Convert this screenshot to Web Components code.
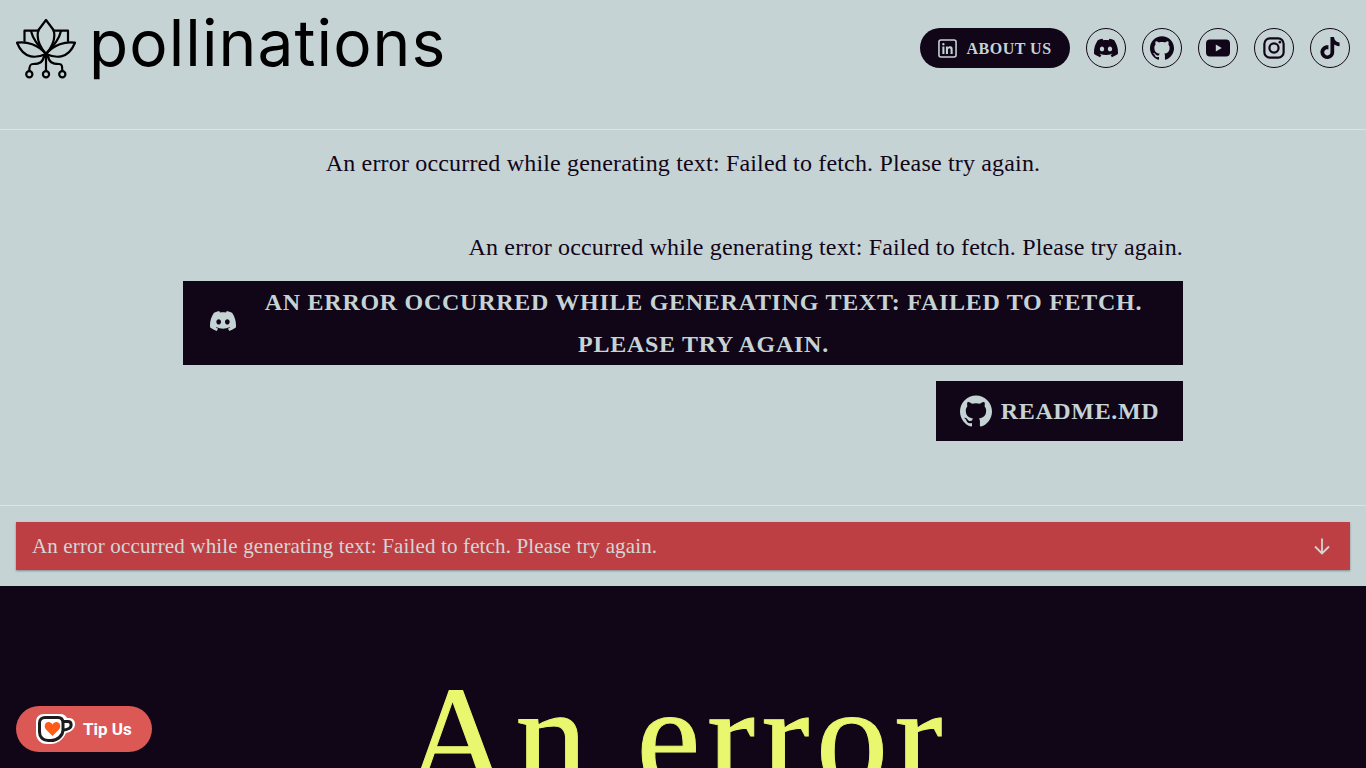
<!DOCTYPE html>
<html lang="en">
<head>
<meta charset="utf-8">
<title>pollinations</title>
<style>
html { overflow: hidden; }
body {
    margin: 0;
    background: #c5d3d5;
    color: #110518;
    font-family: "Liberation Serif", serif;
}
</style>
</head>
<body>
<site-header></site-header>
<intro-section></intro-section>
<error-bar>An error occurred while generating text: Failed to fetch. Please try again.</error-bar>
<hero-section>An error occurred while generating text: Failed to fetch. Please try again.</hero-section>
<tip-button></tip-button>

<script>
const ICONS = {
    discord: '<path fill="currentColor" d="M20.317 4.3698a19.7913 19.7913 0 00-4.8851-1.5152.0741.0741 0 00-.0785.0371c-.211.3753-.4447.8648-.6083 1.2495-1.8447-.2762-3.68-.2762-5.4868 0-.1636-.3933-.4058-.8742-.6177-1.2495a.077.077 0 00-.0785-.037 19.7363 19.7363 0 00-4.8852 1.515.0699.0699 0 00-.0321.0277C.5334 9.0458-.319 13.5799.0992 18.0578a.0824.0824 0 00.0312.0561c2.0528 1.5076 4.0413 2.4228 5.9929 3.0294a.0777.0777 0 00.0842-.0276c.4616-.6304.8731-1.2952 1.226-1.9942a.076.076 0 00-.0416-.1057c-.6528-.2476-1.2743-.5495-1.8722-.8923a.077.077 0 01-.0076-.1277c.1258-.0943.2517-.1923.3718-.2914a.0743.0743 0 01.0776-.0105c3.9278 1.7933 8.18 1.7933 12.0614 0a.0739.0739 0 01.0785.0095c.1202.099.246.1981.3728.2924a.077.077 0 01-.0066.1276 12.2986 12.2986 0 01-1.8732.8914.0766.0766 0 00-.0407.1067c.3604.698.7719 1.3628 1.225 1.9932a.076.076 0 00.0842.0286c1.961-.6067 3.9495-1.5219 6.0023-3.0294a.077.077 0 00.0313-.0552c.5004-5.177-.8382-9.6739-3.5485-13.6604a.061.061 0 00-.0312-.0286zM8.02 15.3312c-1.1825 0-2.1569-1.0857-2.1569-2.419 0-1.3332.9555-2.4189 2.157-2.4189 1.2108 0 2.1757 1.0952 2.1568 2.419 0 1.3332-.9555 2.4189-2.1569 2.4189zm7.9748 0c-1.1825 0-2.1569-1.0857-2.1569-2.419 0-1.3332.9554-2.4189 2.1569-2.4189 1.2108 0 2.1757 1.0952 2.1568 2.419 0 1.3332-.946 2.4189-2.1568 2.4189Z"/>',
    github: '<path fill="currentColor" d="M12 .297c-6.63 0-12 5.373-12 12 0 5.303 3.438 9.8 8.205 11.385.6.113.82-.258.82-.577 0-.285-.01-1.04-.015-2.04-3.338.724-4.042-1.61-4.042-1.61C4.422 18.07 3.633 17.7 3.633 17.7c-1.087-.744.084-.729.084-.729 1.205.084 1.838 1.236 1.838 1.236 1.07 1.835 2.809 1.305 3.495.998.108-.776.417-1.305.76-1.605-2.665-.3-5.466-1.332-5.466-5.93 0-1.31.465-2.38 1.235-3.22-.135-.303-.54-1.523.105-3.176 0 0 1.005-.322 3.3 1.23.96-.267 1.98-.399 3-.405 1.02.006 2.04.138 3 .405 2.28-1.552 3.285-1.23 3.285-1.23.645 1.653.24 2.873.12 3.176.765.84 1.23 1.91 1.23 3.22 0 4.61-2.805 5.625-5.475 5.92.42.36.81 1.096.81 2.22 0 1.606-.015 2.896-.015 3.286 0 .315.21.69.825.57C20.565 22.092 24 17.592 24 12.297c0-6.627-5.373-12-12-12"/>',
    youtube: '<path fill="currentColor" fill-rule="evenodd" d="M4 3.500h16a4 4 0 014 4v9a4 4 0 01-4 4H4a4 4 0 01-4-4v-9a4 4 0 014-4zm5.800 5v7l6-3.500z"/>',
    instagram: '<g fill="none" stroke="currentColor" stroke-width="2.400"><rect x="1.500" y="1.500" width="21" height="21" rx="6"/><circle cx="12" cy="12" r="5"/></g><circle cx="18.400" cy="5.600" r="1.400" fill="currentColor"/>',
    tiktok: '<path fill="currentColor" d="M12.525.02c1.31-.02 2.61-.01 3.91-.02.08 1.53.63 3.09 1.75 4.17 1.12 1.11 2.7 1.62 4.24 1.79v4.03c-1.44-.05-2.89-.35-4.2-.97-.57-.26-1.1-.59-1.62-.93-.01 2.92.01 5.84-.02 8.75-.08 1.4-.54 2.79-1.35 3.94-1.31 1.92-3.58 3.17-5.91 3.21-1.43.08-2.86-.31-4.08-1.03-2.02-1.19-3.44-3.37-3.65-5.71-.02-.5-.03-1-.01-1.49.18-1.9 1.12-3.72 2.58-4.96 1.66-1.44 3.98-2.13 6.15-1.72.02 1.48-.04 2.96-.04 4.44-.99-.32-2.15-.23-3.02.37-.63.41-1.11 1.04-1.36 1.75-.21.51-.15 1.07-.14 1.61.24 1.64 1.82 3.02 3.5 2.87 1.12-.01 2.19-.66 2.77-1.61.19-.33.4-.67.41-1.06.1-1.79.06-3.57.07-5.36.01-4.03-.01-8.05.02-12.07z"/>',
    linkedin: '<rect x="1.200" y="1.200" width="21.600" height="21.600" rx="2.500" fill="none" stroke="currentColor" stroke-width="2"/><path fill="currentColor" d="M5.500 9.500h2.600V19H5.500zM6.800 5a1.500 1.500 0 110 3 1.500 1.500 0 010-3zM10 9.500h2.500v1.300c.5-.9 1.500-1.500 2.800-1.500 2.500 0 3.200 1.600 3.200 3.900V19h-2.600v-5.200c0-1.200-.3-2.200-1.500-2.200s-1.800.9-1.800 2.200V19H10z"/>'
};

function icon(name, size) {
    return `<svg viewBox="0 0 24 24" width="${size}" height="${size}" aria-hidden="true">${ICONS[name]}</svg>`;
}

class SiteLogo extends HTMLElement {
    connectedCallback() {
        this.attachShadow({ mode: 'open' }).innerHTML = `
<style>
:host { display: flex; align-items: flex-start; gap: 13px; }
svg { display: block; margin-top: 3px; }
span {
    font-family: Inter, sans-serif;
    font-weight: 400;
    font-size: 64px;
    line-height: 54px;
    letter-spacing: 1.1px;
    color: #000;
}
</style>
<svg width="60" height="62" viewBox="16 19 60 62" fill="none" stroke="#000" stroke-width="2.200" stroke-linejoin="round" stroke-linecap="round">
    <path d="M46 20 L38.500 30 C36 38 40 47 46 54 C52 47 56 38 53.500 30 Z"/>
    <path d="M38.500 30.700 H24.500 V41 M53.500 30.700 H68 V41"/>
    <path d="M31 31 C33 40 40 48 46 54 C52 48 59 40 61 31"/>
    <path d="M17 42.700 C27 41 38 45 46 54 C37 58 24 60 17 42.700 Z"/>
    <path d="M75 42.700 C65 41 54 45 46 54 C55 58 68 60 75 42.700 Z"/>
    <path d="M46 54 V71 M44 56 C43 62 40 64 33 64 C30 64 29.300 66 29.300 71 M48 56 C49 62 52 64 59 64 C62 64 62.300 66 62.300 71"/>
    <circle cx="29.300" cy="74.300" r="3.100"/>
    <circle cx="46" cy="74.300" r="3.100"/>
    <circle cx="62.300" cy="74.300" r="3.100"/>
</svg>
<span>pollinations</span>`;
    }
}

class AboutButton extends HTMLElement {
    connectedCallback() {
        this.attachShadow({ mode: 'open' }).innerHTML = `
<style>
:host {
    display: flex;
    align-items: center;
    justify-content: center;
    gap: 9px;
    width: 150px;
    height: 40px;
    box-sizing: border-box;
    padding-top: 1px;
    border-radius: 20px;
    background: #110518;
    color: #c5d3d5;
    font-size: 16px;
    font-weight: 700;
    letter-spacing: 0.5px;
}
svg { display: block; margin-top: -1px; }
</style>
${icon('linkedin', 19)}<span>ABOUT US</span>`;
    }
}

class SocialIcon extends HTMLElement {
    connectedCallback() {
        this.attachShadow({ mode: 'open' }).innerHTML = `
<style>
:host {
    display: flex;
    align-items: center;
    justify-content: center;
    width: 40px;
    height: 40px;
    box-sizing: border-box;
    border: 1px solid #110518;
    border-radius: 50%;
    color: #110518;
}
svg { display: block; }
</style>
${icon(this.getAttribute('name'), this.getAttribute('size') || 24)}`;
    }
}

class SiteHeader extends HTMLElement {
    connectedCallback() {
        this.attachShadow({ mode: 'open' }).innerHTML = `
<style>
:host {
    display: flex;
    justify-content: space-between;
    align-items: flex-start;
    height: 129px;
    box-sizing: border-box;
    padding: 16px 16px 0;
}
nav { display: flex; gap: 16px; padding-top: 12px; }
</style>
<site-logo></site-logo>
<nav>
    <about-button></about-button>
    <social-icon name="discord"></social-icon>
    <social-icon name="github"></social-icon>
    <social-icon name="youtube"></social-icon>
    <social-icon name="instagram" size="22"></social-icon>
    <social-icon name="tiktok" size="22"></social-icon>
</nav>`;
    }
}

class IntroSection extends HTMLElement {
    connectedCallback() {
        const msg = 'An error occurred while generating text: Failed to fetch. Please try again.';
        this.attachShadow({ mode: 'open' }).innerHTML = `
<style>
:host {
    display: block;
    height: 377px;
    box-sizing: border-box;
    border-top: 1px solid #dbe5e6;
    border-bottom: 1px solid #dbe5e6;
    font-size: 24px;
    line-height: 34px;
    letter-spacing: 0.17px;
}
.top { text-align: center; padding-top: 16px; }
.col { width: 1000px; margin: 50px auto 0; display: flex; flex-direction: column; align-items: flex-end; }
.bold {
    display: flex;
    align-items: center;
    width: 100%;
    height: 84px;
    margin-top: 17px;
    box-sizing: border-box;
    padding: 0 28px 0 27px;
    gap: 16px;
    background: #110518;
    color: #c5d3d5;
    font-weight: 700;
    font-size: 24px;
    line-height: 42px;
    letter-spacing: 0.72px;
    text-align: center;
    text-transform: uppercase;
}
.bold div { flex: 1; }
.bold svg { flex: none; display: block; margin-top: -4px; }
.readme {
    display: flex;
    align-items: center;
    justify-content: center;
    gap: 9px;
    width: 247px;
    height: 60px;
    margin-top: 16px;
    background: #110518;
    color: #c5d3d5;
    font-weight: 700;
    letter-spacing: 0.65px;
}
.readme svg { display: block; }
</style>
<div class="top">${msg}</div>
<div class="col">
    <div>${msg}</div>
    <div class="bold">${icon('discord', 26)}<div>${msg}</div></div>
    <div class="readme">${icon('github', 32)}<span>README.MD</span></div>
</div>`;
    }
}

class ErrorBar extends HTMLElement {
    connectedCallback() {
        this.attachShadow({ mode: 'open' }).innerHTML = `
<style>
:host {
    display: flex;
    justify-content: space-between;
    align-items: center;
    height: 48px;
    margin: 16px;
    box-sizing: border-box;
    padding: 0 16px;
    background: #bd3f43;
    color: #d3d6d6;
    font-size: 21px;
    letter-spacing: 0.15px;
    box-shadow: 0 1px 2px rgba(0,0,0,.35);
}
svg { display: block; }
</style>
<slot></slot>
<svg width="24" height="24" viewBox="0 0 24 24" fill="none" stroke="currentColor" stroke-width="1.800"><path d="M12 4.500V19M5 12.500l7 7 7-7"/></svg>`;
    }
}

class HeroSection extends HTMLElement {
    connectedCallback() {
        this.attachShadow({ mode: 'open' }).innerHTML = `
<style>
:host {
    display: block;
    height: 900px;
    overflow: hidden;
    box-sizing: border-box;
    padding: 72px 212px 0 200px;
    background: #110518;
    color: #e9f76f;
    font-size: 144px;
    line-height: 160px;
    letter-spacing: 6.5px;
    text-align: center;
    -webkit-text-stroke: 1px #e9f76f;
}
</style>
<slot></slot>`;
    }
}

class TipButton extends HTMLElement {
    connectedCallback() {
        this.attachShadow({ mode: 'open' }).innerHTML = `
<style>
:host {
    position: fixed;
    left: 16px;
    top: 706px;
    display: flex;
    align-items: center;
    gap: 8px;
    width: 136px;
    height: 46px;
    box-sizing: border-box;
    padding-left: 20px;
    border-radius: 23px;
    background: #dc5855;
    color: #fff;
    font-family: Roboto, sans-serif;
    font-weight: 700;
    font-size: 17px;
}
svg { display: block; }
</style>
<svg width="39" height="30" viewBox="0 0 39 30">
    <path d="M8 0 H24 C28 0 30 2 31 4 H33 C37 4 39 7 39 10 C39 15 35 18 30 19 C27 26 21 30 15 30 H11 C4 30 0 25 0 19 V8 C0 3 3 0 8 0 Z" fill="#fff"/>
    <path d="M9 3.500 H22 C26 3.500 27 6 27 9 V16 C27 22 21 26.500 15 26.500 H12 C7 26.500 3.500 23 3.500 18 V9 C3.500 5.500 6 3.500 9 3.500 Z" fill="#fff" stroke="#1c1c1c" stroke-width="3"/>
    <path d="M27.500 7.500 H32 C36 7.500 36 13 33 14.500 C31 15.500 29 16 27 16" fill="none" stroke="#1c1c1c" stroke-width="3"/>
    <path d="M16.500 22 L10 15.500 C7.500 12.500 9 8 12.500 8 C14.300 8 15.700 9 16.500 10.500 C17.300 9 18.700 8 20.500 8 C24 8 25.500 12.500 23 15.500 Z" fill="#ff5a16"/>
</svg>
<span>Tip Us</span>`;
    }
}

customElements.define('site-logo', SiteLogo);
customElements.define('about-button', AboutButton);
customElements.define('social-icon', SocialIcon);
customElements.define('site-header', SiteHeader);
customElements.define('intro-section', IntroSection);
customElements.define('error-bar', ErrorBar);
customElements.define('hero-section', HeroSection);
customElements.define('tip-button', TipButton);
</script>
</body>
</html>
